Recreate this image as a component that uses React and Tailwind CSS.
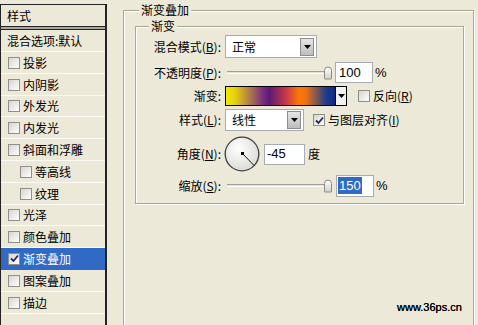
import React from "react";

function Box({ checked }) {
  return (
    <span className="w-[12px] h-[12px] shrink-0 border border-[#8F8F8A] bg-gradient-to-br from-[#D6D5CE] to-[#FFFFFF] flex items-center justify-center">
      {checked && (
        <svg width="9" height="9" viewBox="0 0 9 9">
          <path d="M1 4.5 L3.5 7 L8 1.5" fill="none" stroke="#21296B" strokeWidth="1.8" />
        </svg>
      )}
    </span>
  );
}

function Row({ label, h = "h-[22px]", sub, checked, selected, empty }) {
  return (
    <div
      className={`${h} flex items-center border-b ${selected ? "bg-[#316AC5] text-white border-[#316AC5]" : "border-[#FBFAF6]"} ${sub ? "pl-[19px]" : "pl-[7px]"}`}
    >
      {!empty && <Box checked={checked} />}
      <span className="ml-[3px] leading-[14px]">{label}</span>
    </div>
  );
}

function Arrow() {
  return (
    <svg width="7" height="4" viewBox="0 0 7 4">
      <path d="M0 0 H7 L3.5 4 Z" fill="#000" />
    </svg>
  );
}

function Select({ value, w }) {
  return (
    <div className={`${w} h-full bg-white border border-[#A5ACB2] flex items-center justify-between pl-[6px] pr-[2px]`}>
      <span className="leading-[14px]">{value}</span>
      <span className="w-[14px] h-[18px] bg-gradient-to-b from-[#E6E6E6] to-[#BDBDBD] border border-[#8D8D8D] flex items-center justify-center">
        <Arrow />
      </span>
    </div>
  );
}

function Slider() {
  return (
    <div className="w-[109px] h-full relative flex items-center pl-[2px]">
      <div className="w-[104px] h-[3px] border-t border-[#A0A09A] bg-[#E4E2D8] border-b border-b-white" />
      <div className="absolute left-[99px] top-1/2 -translate-y-1/2 w-[8px] h-[13px] rounded-t-[4px] rounded-b-[1px] border border-[#8A8A85] bg-gradient-to-b from-[#FFFFFF] to-[#D2D2CC]" />
    </div>
  );
}

function Label({ children }) {
  return <div className="w-[85px] shrink-0 text-right leading-[14px]">{children}</div>;
}

export default function App() {
  return (
    <div className="w-[478px] h-[325px] bg-[#ECE9D8] flex overflow-hidden relative text-[12px] text-black font-['Noto_Sans_CJK_SC',sans-serif]">
      {/* left list */}
      <div className="w-[107px] shrink-0 pt-[4px] h-[360px]">
        <div className="h-full border-l border-t border-r-2 border-[#232323] bg-[#ECE9D8]">
          <div className="h-[22px] flex items-center pl-[6px] border-b border-[#232323]">
            <span className="leading-[14px]">样式</span>
          </div>
          <div className="h-[3px] bg-[#A9A89E] border-b border-[#232323]" />
          <div className="h-[22px] flex items-center pl-[6px] border-b border-[#FBFAF6]">
            <span className="leading-[14px]">混合选项:默认</span>
          </div>
          <Row label="投影" />
          <Row label="内阴影" />
          <Row label="外发光" h="h-[21px]" />
          <Row label="内发光" />
          <Row label="斜面和浮雕" />
          <Row label="等高线" sub />
          <Row label="纹理" sub />
          <Row label="光泽" h="h-[21px]" />
          <Row label="颜色叠加" />
          <Row label="渐变叠加" checked selected />
          <Row label="图案叠加" />
          <Row label="描边" />
          <Row label="" empty />
        </div>
      </div>

      {/* right */}
      <div className="relative ml-[16px] mt-[10px] w-[351px] h-[340px] border border-[#A9A79A] shadow-[inset_1px_1px_0_#FFFFFF,1px_1px_0_#FFFFFF] shrink-0">
        <span className="absolute left-[15px] -top-[8px] bg-[#ECE9D8] px-[2px] leading-[14px]">渐变叠加</span>
        <div className="relative ml-[11px] mt-[15px] w-[329px] h-[178px] border border-[#A9A79A] shadow-[inset_1px_1px_0_#FFFFFF,1px_1px_0_#FFFFFF] pt-[8px]">
          <span className="absolute left-[13px] -top-[8px] bg-[#ECE9D8] px-[2px] leading-[14px]">渐变</span>

          <div className="flex flex-col">
            {/* blend mode */}
            <div className="h-[23px] flex items-center">
              <Label>混合模式(<u>B</u>):</Label>
              <div className="ml-[4px] h-full">
                <Select value="正常" w="w-[92px]" />
              </div>
            </div>

            {/* opacity */}
            <div className="h-[21px] mt-[4px] flex items-center">
              <Label>不透明度(<u>P</u>):</Label>
              <div className="ml-[4px] h-full flex items-center">
                <Slider />
                <div className="ml-[1px] w-[38px] h-[21px] bg-white border border-[#A5ACB2] pl-[3px] flex items-center text-[13px] font-['Liberation_Sans',sans-serif]">100</div>
                <span className="ml-[2px] text-[13px] font-['Liberation_Sans',sans-serif]">%</span>
              </div>
            </div>

            {/* gradient */}
            <div className="h-[20px] mt-[3px] flex items-center">
              <Label>渐变:</Label>
              <div className="ml-[4px] h-full flex items-center">
                <div className="w-[122px] h-[20px] border border-black flex">
                  <div className="w-[109px] h-full bg-[linear-gradient(to_right,#F6EA00_0%,#E3CC10_9%,#7B2C82_34%,#5E1A72_40%,#C8384A_55%,#FF7800_67%,#EE7214_73%,#1C3C8C_92%,#0A2A82_100%)]" />
                  <div className="w-[11px] h-full border-l border-black bg-[#F2F1EC] flex items-center justify-center">
                    <Arrow />
                  </div>
                </div>
                <div className="ml-[11px] flex items-center">
                  <Box />
                  <span className="ml-[3px] leading-[14px]">反向(<u>R</u>)</span>
                </div>
              </div>
            </div>

            {/* style */}
            <div className="h-[22px] mt-[3px] flex items-center">
              <Label>样式(<u>L</u>):</Label>
              <div className="ml-[4px] h-full flex items-center">
                <Select value="线性" w="w-[79px]" />
                <div className="ml-[9px] flex items-center">
                  <Box checked />
                  <span className="ml-[3px] leading-[14px]">与图层对齐(<u>I</u>)</span>
                </div>
              </div>
            </div>

            {/* angle */}
            <div className="h-[36px] mt-[5px] flex items-center">
              <Label>角度(<u>N</u>):</Label>
              <div className="ml-[3px] h-full flex items-center">
                <svg width="36" height="36" viewBox="0 0 36 36">
                  <defs>
                    <radialGradient id="dial" cx="40%" cy="35%" r="70%">
                      <stop offset="0%" stopColor="#FFFFFF" />
                      <stop offset="100%" stopColor="#D9D9D4" />
                    </radialGradient>
                  </defs>
                  <circle cx="18" cy="18" r="16.8" fill="url(#dial)" stroke="#3E3E46" strokeWidth="1.3" />
                  <line x1="18.5" y1="17.5" x2="30" y2="29.5" stroke="#111" strokeWidth="1" />
                  <rect x="17" y="16" width="3" height="3" fill="#000" />
                </svg>
                <div className="ml-[4px] w-[41px] h-[21px] bg-white border border-[#A5ACB2] pl-[2px] flex items-center text-[13px] font-['Liberation_Sans',sans-serif]">-45</div>
                <span className="ml-[3px] leading-[14px]">度</span>
              </div>
            </div>

            {/* scale */}
            <div className="h-[23px] mt-[2px] flex items-center">
              <Label>缩放(<u>S</u>):</Label>
              <div className="ml-[4px] h-full flex items-center">
                <Slider />
                <div className="ml-[2px] w-[38px] h-[22px] bg-white border border-[#A5ACB2] pl-[1px] flex items-center text-[13px] font-['Liberation_Sans',sans-serif]">
                  <span className="bg-[#316AC5] text-white px-[1px] leading-[17px]">150</span>
                </div>
                <span className="ml-[2px] text-[13px] font-['Liberation_Sans',sans-serif]">%</span>
              </div>
            </div>
          </div>
        </div>
      </div>

      <span className="absolute left-[397px] top-[301px] text-[11px] font-['Liberation_Sans',sans-serif] text-black leading-[13px] [text-shadow:0_0_0.3px_#000]">www.36ps.cn</span>
    </div>
  );
}
